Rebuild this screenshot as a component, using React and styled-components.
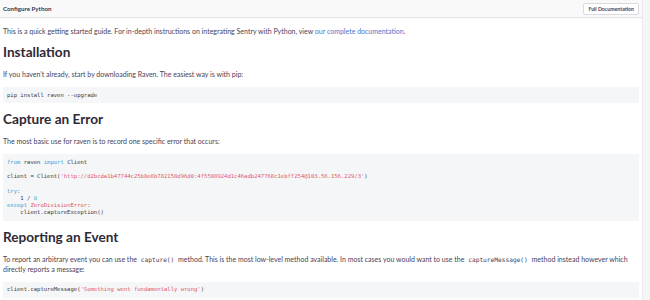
import React from 'react'
import styled, { createGlobalStyle } from 'styled-components'

const GlobalStyle = createGlobalStyle`
  html, body {
    margin: 0;
    padding: 0;
    background: #fff;
  }
  body {
    font-family: Lato, 'Liberation Sans', sans-serif;
    color: #4a3e56;
  }
`

const dsn =
  'http://d2bcda1b47744c25b8e8b782158d96d0:4f5508924d1c46adb247768c1ebff254@103.56.156.229/3'

function App() {
  return (
    <>
      <GlobalStyle />
      <Page>
        <Panel>
          <Header>
            <Title>Configure Python</Title>
            <DocButton>Full Documentation</DocButton>
          </Header>
          <Body>
            <Text>
              This is a quick getting started guide. For in-depth instructions on integrating Sentry
              with Python, view <Link>our complete documentation</Link>.
            </Text>

            <Heading>Installation</Heading>
            <Text>If you haven’t already, start by downloading Raven. The easiest way is with pip:</Text>
            <Code>pip install raven --upgrade</Code>

            <Heading>Capture an Error</Heading>
            <Text>The most basic use for raven is to record one specific error that occurs:</Text>
            <Code>
              <Kw>from</Kw> raven <Kw>import</Kw> Client
              {'\n\n'}client = Client(<Str>'{dsn}'</Str>)
              {'\n\n'}
              <Kw>try</Kw>:{'\n'}
              {'    '}1 / <Num>0</Num>
              {'\n'}
              <Kw>except</Kw> <Str>ZeroDivisionError</Str>:{'\n'}
              {'    '}client.captureException()
            </Code>

            <Heading>Reporting an Event</Heading>
            <Text>
              To report an arbitrary event you can use the <InlineCode>capture()</InlineCode> method.
              This is the most low-level method available. In most cases you would want to use the{' '}
              <InlineCode>captureMessage()</InlineCode> method instead however which directly
              reports a message:
            </Text>
            <Code>
              client.captureMessage(<Str>'Something went fundamentally wrong'</Str>)
            </Code>
          </Body>
        </Panel>
        <Gutter />
      </Page>
    </>
  )
}

const Page = styled.div`
  display: flex;
  width: 650px;
  height: 300px;
  overflow: hidden;
`

const Panel = styled.div`
  width: 642px;
  flex-shrink: 0;
  border-right: 1px solid #ececec;
`

const Gutter = styled.div`
  flex: 1;
  background: #f6f6f7;
`

const Header = styled.div`
  height: 17px;
  display: flex;
  align-items: center;
  justify-content: space-between;
  padding: 0 3px;
  background: #f9f9fa;
  border-bottom: 1px solid #e6e6e9;
  box-shadow: 0 1px 1px rgba(0, 0, 0, 0.03);
`

const Title = styled.div`
  font-size: 6.2px;
  font-weight: 700;
  color: #3d3547;
`

const DocButton = styled.button`
  font-family: Lato, 'Liberation Sans', sans-serif;
  font-size: 5.2px;
  font-weight: 700;
  color: #4a3e56;
  background: #fff;
  border: 1px solid #dcdadf;
  border-radius: 2px;
  padding: 2px 4px;
  height: 12px;
  line-height: 6px;
`

const Body = styled.div`
  padding: 0 3px;
`

const Text = styled.p`
  font-size: 7px;
  line-height: 10px;
  margin: 8px 0 0;
`

const Link = styled.a`
  color: #4a76c9;
`

const Heading = styled.h2`
  font-size: 13.6px;
  font-weight: 700;
  color: #2f2936;
  margin: 7px 0 0;
  line-height: 18px;
`

const Code = styled.pre`
  font-family: 'DejaVu Sans Mono', 'Liberation Mono', monospace;
  font-size: 5.55px;
  line-height: 7.2px;
  color: #3b3a40;
  background: #f5f6f8;
  margin: 8px 0 0;
  padding: 4.5px 4px;
  white-space: pre;
`

const InlineCode = styled.code`
  font-family: 'DejaVu Sans Mono', 'Liberation Mono', monospace;
  font-size: 6.2px;
  line-height: 1;
  color: #4a3e56;
  padding: 0 2px;
`

const Kw = styled.span`
  color: #3c9fd8;
`

const Str = styled.span`
  color: #e0576b;
`

const Num = styled.span`
  color: #46b3c4;
`

export default App
